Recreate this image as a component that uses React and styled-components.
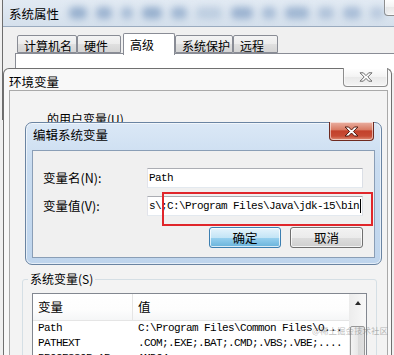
import React from "react";
import styled, { createGlobalStyle } from "styled-components";

const GlobalStyle = createGlobalStyle`
  html, body { margin: 0; padding: 0; background: #f0f0f0; overflow: hidden; }
  body {
    font-family: "Noto Sans CJK SC", "Liberation Sans", sans-serif;
    font-size: 12px;
    color: #000;
  }
  * { box-sizing: border-box; }
`;

const Desktop = styled.div`
  position: relative;
  width: 394px;
  height: 355px;
  overflow: hidden;
  background: #f0f0f0;
`;

/* ---------- 系统属性 (behind) ---------- */
const SysWindow = styled.div`
  position: absolute;
  left: 2px;
  top: 0;
  width: 412px;
  height: 120px;
  border-left: 1px solid #6d6d6d;
  background: #f0f0f0;
`;

const SysTitleBar = styled.div`
  display: flex;
  align-items: flex-start;
  height: 27px;
  background: linear-gradient(#e2eaf3, #d5e0ec);
  border-bottom: 1px solid #9aabbf;
  overflow: hidden;
`;

const TitleText = styled.div`
  padding: ${(p) => p.$top || 5}px 0 0 ${(p) => p.$left || 6}px;
  line-height: 16px;
  font-size: 12.5px;
  white-space: nowrap;
`;

const BlobRow = styled.div`
  display: flex;
  align-items: center;
  gap: 9px;
  margin: 7px 0 0 10px;
  flex: 1;
  filter: blur(3.5px);
`;

const Blob = styled.span`
  width: ${(p) => p.$w}px;
  height: 12px;
  border-radius: 5px;
  background: #86a2c6;
  opacity: ${(p) => p.$o};
`;

const SysBody = styled.div`
  padding: 6px 0 0 12px;
`;

const TabStrip = styled.div`
  display: flex;
  align-items: flex-end;
  height: 20px;
  margin-left: 2px;
`;

const Tab = styled.div`
  position: relative;
  z-index: ${(p) => (p.$active ? 2 : 0)};
  width: ${(p) => p.$w}px;
  height: ${(p) => (p.$active ? 22 : 18)}px;
  margin-left: ${(p) => (p.$active ? 2 : 0)}px;
  margin-bottom: ${(p) => (p.$active ? -2 : 0)}px;
  padding: ${(p) => (p.$active ? 4 : 3)}px 0 0 6px;
  line-height: 14px;
  font-size: 12px;
  white-space: nowrap;
  border: 1px solid #898c95;
  border-bottom: ${(p) => (p.$active ? "none" : "1px solid #898c95")};
  border-radius: 2px 2px 0 0;
  background: ${(p) =>
    p.$active ? "#fff" : "linear-gradient(#f4f4f4, #ececec 50%, #e0e0e0 51%, #d4d4d4)"};
`;

const TabPanel = styled.div`
  height: 20px;
  background: #fff;
  border-top: 1px solid #898c95;
  border-left: 1px solid #898c95;
`;

/* ---------- close buttons ---------- */
const CloseButton = styled.div`
  flex: none;
  display: flex;
  align-items: center;
  justify-content: center;
  width: 45px;
  height: ${(p) => p.$h}px;
  margin: -1px ${(p) => p.$mr}px 0 auto;
  border: 1px solid ${(p) => (p.$red ? "#6e2a20" : "#8d8d8d")};
  border-top: none;
  border-radius: 0 0 4px 4px;
  background: ${(p) =>
    p.$red
      ? "linear-gradient(#eab0a2 0%, #d97c65 42%, #c3412b 50%, #c64b34 78%, #df8f78 100%)"
      : "linear-gradient(#ffffff, #f3f3f3 50%, #e9e9e9 51%, #f4f4f4)"};
  box-shadow: inset 0 0 0 1px rgba(255, 255, 255, 0.55);
`;

const CloseGlyph = ({ red }) => (
  <svg width={red ? 15 : 14} height={red ? 11 : 10} viewBox="0 0 14 10">
    <path
      d="M1 0.8 H4.3 L7 3.6 L9.7 0.8 H13 L8.8 5 L13 9.2 H9.7 L7 6.4 L4.3 9.2 H1 L5.2 5 Z"
      fill="#fff"
      stroke={red ? "#4a1309" : "#5c5c5c"}
      strokeWidth="0.9"
      strokeLinejoin="round"
    />
  </svg>
);

/* ---------- 环境变量 ---------- */
const EnvWindow = styled.div`
  position: absolute;
  z-index: 1;
  left: 3px;
  top: 68px;
  width: 389px;
  height: 300px;
  display: flex;
  flex-direction: column;
  background: #f8f8f8;
  border: 1px solid #707070;
  border-bottom: none;
  border-radius: 6px 6px 0 0;
`;

const EnvTitleBar = styled.div`
  display: flex;
  align-items: flex-start;
  height: 28px;
`;

const EnvPanel = styled.div`
  flex: 1;
  margin: 0 3px 0 5px;
  display: flex;
  flex-direction: column;
  background: #f3f3f3;
  border: 1px solid #a9a9a9;
  border-bottom: none;
`;

const GroupCaption = styled.div`
  margin: 20px 0 0 37px;
  line-height: 16px;
  font-size: 12px;
  white-space: nowrap;
`;

const UserArea = styled.div`
  height: 144px;
`;

const GroupBox = styled.fieldset`
  margin: 0 10px 0 12px;
  padding: 0 0 20px 0;
  min-width: 0;
  border: 1px solid #d5dfe5;
  border-radius: 3px;
`;

const GroupLegend = styled.legend`
  margin-left: 5px;
  padding: 0 2px;
  line-height: 16px;
  font-size: 12px;
`;

const ListBox = styled.div`
  display: flex;
  width: 335px;
  height: 80px;
  margin: 6px 0 0 9px;
  background: #fff;
  border: 1px solid #828790;
`;

const ListTable = styled.div`
  flex: 1;
  min-width: 0;
`;

const HeaderRow = styled.div`
  display: flex;
  height: 27px;
  border-bottom: 1px solid #e5e5e5;
  background: linear-gradient(#ffffff, #fdfdfd 60%, #f5f6f7);
`;

const HeaderCell = styled.div`
  width: ${(p) => (p.$first ? "99px" : "auto")};
  flex: ${(p) => (p.$first ? "none" : "1")};
  padding-left: 5px;
  line-height: 26px;
  font-size: 12.5px;
  border-left: ${(p) => (p.$first ? "none" : "1px solid #e5e5e5")};
`;

const Row = styled.div`
  display: flex;
  height: 15px;
  line-height: 15px;
  font-family: "Liberation Mono", "DejaVu Sans Mono", monospace;
  font-size: 11px;
  letter-spacing: -0.6px;
  white-space: nowrap;
`;

const Cell = styled.div`
  width: ${(p) => (p.$first ? "99px" : "auto")};
  flex: ${(p) => (p.$first ? "none" : "1")};
  padding-left: ${(p) => (p.$first ? 5 : 6)}px;
  overflow: hidden;
`;

const ScrollBar = styled.div`
  flex: none;
  width: 17px;
  display: flex;
  flex-direction: column;
  align-items: center;
  background: linear-gradient(90deg, #ececec, #f8f8f8);
`;

const ScrollArrow = styled.div`
  display: flex;
  align-items: center;
  justify-content: center;
  width: 17px;
  height: 17px;
  &::after {
    content: "";
    border-left: 3.5px solid transparent;
    border-right: 3.5px solid transparent;
    border-bottom: 4px solid #2a2a2a;
  }
`;

const ScrollThumb = styled.div`
  width: 15px;
  height: 34px;
  margin-top: 15px;
  border: 1px solid #979797;
  border-radius: 2px;
  background: linear-gradient(90deg, #f3f3f3, #e8e8e8 50%, #d9d9d9 51%, #e0e0e0);
`;

/* ---------- 编辑系统变量 ---------- */
const EditDialog = styled.div`
  position: absolute;
  z-index: 3;
  left: 25px;
  top: 122px;
  width: 357px;
  height: 143px;
  display: flex;
  flex-direction: column;
  border: 1px solid #6a84a2;
  border-radius: 7px;
  background: linear-gradient(180deg, #dbe8f6 0%, #c9dcf0 30%, #bfd5ed 100%);
  box-shadow: inset 0 0 0 1px rgba(255, 255, 255, 0.6);
`;

const DialogTitleBar = styled.div`
  display: flex;
  align-items: flex-start;
  height: 27px;
`;

const DialogClient = styled.div`
  flex: 1;
  margin: 0 6px 6px 6px;
  padding: 17px 11px 0 10px;
  background: #f0f0f0;
  border: 1px solid #8a9eb6;
`;

const FormGrid = styled.div`
  display: grid;
  grid-template-columns: 104px 216px;
  row-gap: 8px;
  align-items: center;
`;

const FieldLabel = styled.div`
  font-size: 12.5px;
  line-height: 20px;
  white-space: nowrap;
`;

const TextBox = styled.div`
  display: flex;
  align-items: center;
  height: 20px;
  padding-left: 1px;
  overflow: hidden;
  white-space: nowrap;
  background: #fff;
  border: 1px solid;
  border-color: #abadb3 #dbdfe6 #e3e9ef #e2e3ea;
  font-family: "Liberation Mono", "DejaVu Sans Mono", monospace;
  font-size: 11px;
  letter-spacing: -0.6px;
`;

const Caret = styled.span`
  flex: none;
  width: 1px;
  height: 14px;
  margin-left: 1px;
  background: #000;
`;

const ButtonRow = styled.div`
  grid-column: 1 / -1;
  display: flex;
  justify-content: flex-end;
  gap: 9px;
  margin-top: 3px;
`;

const DialogButton = styled.div`
  width: ${(p) => p.$w}px;
  height: 21px;
  line-height: 19px;
  text-align: center;
  font-size: 12.5px;
  border-radius: 3px;
  border: 1px solid ${(p) => (p.$primary ? "#3c7fb1" : "#707070")};
  background: ${(p) =>
    p.$primary
      ? "linear-gradient(#e5f4fc, #c4e5f6 50%, #98d1ef 51%, #68b3db)"
      : "linear-gradient(#f2f2f2, #ebebeb 50%, #dddddd 51%, #cfcfcf)"};
  box-shadow: inset 0 0 0 1px rgba(255, 255, 255, 0.75);
`;

/* ---------- overlays ---------- */
const Highlight = styled.div`
  position: absolute;
  z-index: 5;
  left: 162px;
  top: 192px;
  width: 211px;
  height: 34px;
  border: 2px solid #e0262b;
`;

const Watermark = styled.div`
  position: absolute;
  z-index: 5;
  left: 312px;
  top: 324px;
  font-size: 8.5px;
  line-height: 12px;
  white-space: nowrap;
  color: rgba(120, 120, 120, 0.5);
`;

const blobs = [
  [18, 0.8], [16, 0.75], [12, 0.6], [20, 0.8], [16, 0.7], [26, 0.35],
  [22, 0.75], [14, 0.6], [24, 0.7], [16, 0.5], [18, 0.6], [14, 0.4],
];

const tabs = [
  { label: "计算机名", w: 60 },
  { label: "硬件", w: 44 },
  { label: "高级", w: 52, active: true },
  { label: "系统保护", w: 58 },
  { label: "远程", w: 45 },
];

const sysVars = [
  ["Path", "C:\\Program Files\\Common Files\\O..."],
  ["PATHEXT", ".COM;.EXE;.BAT;.CMD;.VBS;.VBE;...."],
  ["PROCESSOR_AR...", "AMD64"],
];

export default function App() {
  return (
    <Desktop>
      <GlobalStyle />

      <SysWindow>
        <SysTitleBar>
          <TitleText $top={6}>系统属性</TitleText>
          <BlobRow>
            {blobs.map(([w, o], i) => (
              <Blob key={i} $w={w} $o={o} />
            ))}
          </BlobRow>
          <CloseButton $h={17} $mr={0}>
            <CloseGlyph />
          </CloseButton>
        </SysTitleBar>
        <SysBody>
          <TabStrip>
            {tabs.map((t) => (
              <Tab key={t.label} $w={t.w} $active={t.active}>
                {t.label}
              </Tab>
            ))}
          </TabStrip>
          <TabPanel />
        </SysBody>
      </SysWindow>

      <EnvWindow>
        <EnvTitleBar>
          <TitleText $top={5} $left={5}>环境变量</TitleText>
          <CloseButton $h={19} $mr={3}>
            <CloseGlyph />
          </CloseButton>
        </EnvTitleBar>
        <EnvPanel>
          <GroupCaption>的用户变量(U)</GroupCaption>
          <UserArea />
          <GroupBox>
            <GroupLegend>系统变量(S)</GroupLegend>
            <ListBox>
              <ListTable>
                <HeaderRow>
                  <HeaderCell $first>变量</HeaderCell>
                  <HeaderCell>值</HeaderCell>
                </HeaderRow>
                {sysVars.map(([name, value]) => (
                  <Row key={name}>
                    <Cell $first>{name}</Cell>
                    <Cell>{value}</Cell>
                  </Row>
                ))}
              </ListTable>
              <ScrollBar>
                <ScrollArrow />
                <ScrollThumb />
              </ScrollBar>
            </ListBox>
          </GroupBox>
        </EnvPanel>
      </EnvWindow>

      <EditDialog>
        <DialogTitleBar>
          <TitleText $top={4} $left={7}>编辑系统变量</TitleText>
          <CloseButton $red $h={19} $mr={7}>
            <CloseGlyph red />
          </CloseButton>
        </DialogTitleBar>
        <DialogClient>
          <FormGrid>
            <FieldLabel>变量名(N):</FieldLabel>
            <TextBox>Path</TextBox>
            <FieldLabel>变量值(V):</FieldLabel>
            <TextBox>
              {"s\\;C:\\Program Files\\Java\\jdk-15\\bin"}
              <Caret />
            </TextBox>
            <ButtonRow>
              <DialogButton $primary $w={72}>确定</DialogButton>
              <DialogButton $w={73}>取消</DialogButton>
            </ButtonRow>
          </FormGrid>
        </DialogClient>
      </EditDialog>

      <Highlight />
      <Watermark>@稀土掘金技术社区</Watermark>
    </Desktop>
  );
}
